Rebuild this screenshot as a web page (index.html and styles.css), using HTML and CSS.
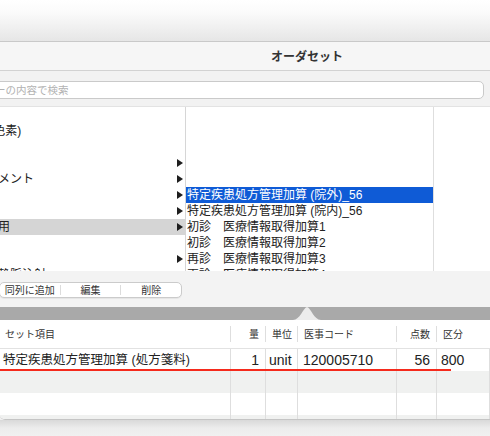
FILE: index.html
```html
<!DOCTYPE html>
<html>
    <head>
        <title>オーダセット</title>
        <link rel="stylesheet" href="styles.css">
    </head>
    <body>
    <div class="desk"></div>
    <div class="window">
        <div class="titlebar">オーダセット</div>
        <div class="searchrow">
            <div class="search">ツリーの内容で検索</div>
        </div>
        <div class="browser">
            <div class="col col-left">
                <div class="row"><span class="txt"></span></div>
                <div class="row"><span class="txt">血液学的検査 (色素)</span></div>
                <div class="row"><span class="txt"></span></div>
                <div class="row"><span class="txt"></span><i class="arrow"></i></div>
                <div class="row"><span class="txt">よく使う処方コメント</span><i class="arrow"></i></div>
                <div class="row"><span class="txt"></span><i class="arrow"></i></div>
                <div class="row"><span class="txt"></span><i class="arrow"></i></div>
                <div class="row row-sel"><span class="txt">在宅医療・指導用</span><i class="arrow"></i></div>
                <div class="row"><span class="txt"></span></div>
                <div class="row"><span class="txt"></span><i class="arrow"></i></div>
                <div class="row"><span class="txt">点滴注射・中心静脈注射</span></div>
            </div>
            <div class="col col-mid">
                <div class="row"></div>
                <div class="row"></div>
                <div class="row"></div>
                <div class="row"></div>
                <div class="row"></div>
                <div class="row row-active">特定疾患処方管理加算 (院外)_56</div>
                <div class="row">特定疾患処方管理加算 (院内)_56</div>
                <div class="row">初診　医療情報取得加算1</div>
                <div class="row">初診　医療情報取得加算2</div>
                <div class="row">再診　医療情報取得加算3</div>
                <div class="row">再診　医療情報取得加算4</div>
            </div>
            <div class="col col-right"></div>
        </div>
        <div class="btnbar">
            <div class="seg">
                <span class="seg-item">同列に追加</span>
                <span class="seg-item">編集</span>
                <span class="seg-item">削除</span>
            </div>
        </div>
    </div>

    <div class="band">
        <svg class="notch" width="28" height="13" viewBox="0 0 28 13">
            <path d="M0,13 C7,13 10,1 14,0 C18,1 21,13 28,13 Z" fill="#ececec"/>
        </svg>
    </div>

    <div class="sheet">
        <div class="thead">
            <div class="th">セット項目</div>
            <div class="th num">量</div>
            <div class="th">単位</div>
            <div class="th">医事コード</div>
            <div class="th num">点数</div>
            <div class="th last">区分</div>
        </div>
        <div class="tr first">
            <div class="td name">特定疾患処方管理加算 (処方箋料)</div>
            <div class="td num">1</div>
            <div class="td unit">unit</div>
            <div class="td">120005710</div>
            <div class="td num">56</div>
            <div class="td last kubun">800</div>
            <div class="redline"></div>
        </div>
        <div class="tr alt">
            <div class="td"></div><div class="td"></div><div class="td"></div>
            <div class="td"></div><div class="td"></div><div class="td last"></div>
        </div>
        <div class="tr">
            <div class="td"></div><div class="td"></div><div class="td"></div>
            <div class="td"></div><div class="td"></div><div class="td last"></div>
        </div>
        <div class="tr alt stub">
            <div class="td"></div><div class="td"></div><div class="td"></div>
            <div class="td"></div><div class="td"></div><div class="td last"></div>
        </div>
    </div>
    <div class="shadow"></div>
    </body>
</html>
```

FILE: styles.css
```css
body {
    margin: 0;
    width: 490px;
    height: 436px;
    overflow: hidden;
    background: #f0f0f0;
    font-family: "Liberation Sans", "Noto Sans CJK JP", sans-serif;
    color: #222;
}

.desk {
    height: 41px;
    background: linear-gradient(#ffffff 0, #fbfbfb 12px, #e6e6e6 41px);
}

.window {
    margin-left: -100px;
    width: 592px;
    border-top: 1px solid #c9c9c9;
    background: #f2f2f2;
}

.titlebar {
    height: 28px;
    line-height: 28px;
    padding-left: 222px;
    text-align: center;
    font-family: "Noto Sans CJK JP", sans-serif;
    font-weight: bold;
    font-size: 12px;
    color: #333;
    background: #f6f6f6;
    border-bottom: 1px solid #d2d2d2;
}

.searchrow {
    height: 36px;
    padding-top: 10px;
    box-sizing: border-box;
    border-bottom: 1px solid #e3e3e3;
}

.search {
    margin-left: 60px;
    margin-right: 8px;
    height: 18px;
    box-sizing: border-box;
    border: 1px solid #cacaca;
    border-radius: 5px;
    background: #fff;
    padding-left: 13px;
    font-family: "Noto Sans CJK JP", sans-serif;
    font-size: 10.5px;
    line-height: 16px;
    color: #b2b2b2;
}

.browser {
    display: flex;
    height: 164px;
    overflow: hidden;
    background: #fff;
}

.col {
    box-sizing: border-box;
    height: 100%;
    overflow: hidden;
}

.col-left {
    width: 286px;
    border-right: 1px solid #d6d6d6;
}

.col-mid {
    width: 248px;
    border-right: 1px solid #dedede;
}

.col-right {
    flex: 1;
}

.row {
    height: 16px;
    line-height: 16px;
    font-size: 12px;
    white-space: nowrap;
}

.col-left .row {
    display: flex;
    align-items: center;
    padding: 0 2px 0 14px;
}

.col-left .txt {
    flex: 1;
    overflow: hidden;
}

.arrow {
    width: 0;
    height: 0;
    border-left: 6px solid #1e1e1e;
    border-top: 4px solid transparent;
    border-bottom: 4px solid transparent;
}

.row-sel {
    background: #d5d5d5;
}

.col-mid .row {
    padding-left: 1px;
}

.row-active {
    background: #0f5bd6;
    color: #fff;
}

.btnbar {
    height: 36px;
    padding-top: 11px;
    box-sizing: border-box;
    background: #f3f3f3;
}

.seg {
    display: flex;
    margin-left: 99px;
    width: 183px;
    height: 16px;
    box-sizing: border-box;
    border: 1px solid #cbcbcb;
    border-radius: 5px;
    background: #fff;
    box-shadow: 0 1px 0 rgba(0,0,0,0.05);
}

.seg-item {
    flex: 1;
    text-align: center;
    font-family: "Noto Sans CJK JP", sans-serif;
    font-size: 10px;
    color: #333;
    border-right: 1px solid #dcdcdc;
    margin: 2px 0;
    line-height: 10px;
}

.seg-item:last-child {
    border-right: none;
}

.band {
    height: 13px;
    background: #a9a9a9;
    display: flex;
    align-items: flex-end;
}

.notch {
    display: block;
    margin-left: 293px;
}

.sheet {
    background: #fff;
    border-bottom: 1px solid #c5c5c5;
    border-radius: 0 0 0 5px;
    overflow: hidden;
}

.thead,
.tr {
    display: grid;
    grid-template-columns: 231px 35px 32px 99px 40px 1fr;
}

.thead {
    height: 29px;
    box-sizing: border-box;
    border-bottom: 1px solid #e2e2e2;
}

.th {
    margin: 6px 0;
    height: 16px;
    line-height: 16px;
    padding: 0 6px;
    font-family: "Noto Sans CJK JP", sans-serif;
    font-size: 10px;
    color: #333;
    white-space: nowrap;
    border-right: 1px solid #dedede;
}

.th:first-child {
    padding-left: 5px;
}

.num {
    text-align: right;
}

.last {
    border-right: none;
}

.tr {
    height: 22px;
    position: relative;
}

.tr.first {
    z-index: 1;
}

.tr.alt {
    background: #f0f1f0;
}

.tr.stub {
    height: 4px;
}

.td {
    border-right: 1px solid #dedede;
    font-size: 14px;
    line-height: 22px;
    padding: 0 6px 0 5px;
    white-space: nowrap;
    overflow: hidden;
}

.td.name {
    padding-left: 3px;
    font-size: 12.5px;
}

.td.unit {
    padding-left: 3px;
}

.td.kubun {
    padding-left: 4px;
}

.redline {
    position: absolute;
    left: 0;
    top: 20px;
    width: 451px;
    height: 2px;
    background: #f52a1c;
}

.shadow {
    height: 20px;
    background: linear-gradient(#d9d9d9, #ececec 8px, #f3f3f3);
}
```
